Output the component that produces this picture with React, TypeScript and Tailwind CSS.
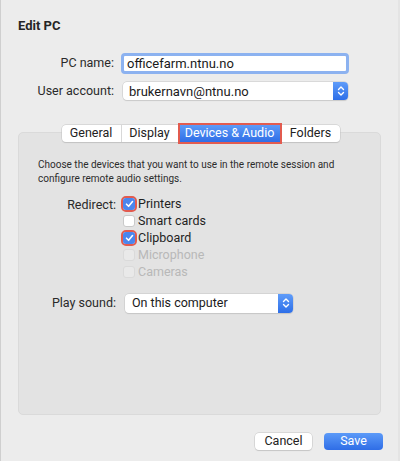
import React from "react";

const font = { fontFamily: "Roboto, 'Liberation Sans', sans-serif" };

function Stepper() {
  return (
    <div className="w-[15px] self-stretch rounded-r-[4px] bg-gradient-to-b from-[#5f9cf9] to-[#2d6ee8] flex items-center justify-center">
      <svg width="8" height="12" viewBox="0 0 8 12" fill="none" stroke="white" strokeWidth="1.4" strokeLinecap="round" strokeLinejoin="round">
        <path d="M1.5 4.5 L4 2 L6.5 4.5" />
        <path d="M1.5 7.5 L4 10 L6.5 7.5" />
      </svg>
    </div>
  );
}

function Check({ state, label }: { state: "on" | "off" | "disabled"; label: string }) {
  return (
    <div className="flex items-center h-[17px]">
      {state === "on" ? (
        <div className="w-[16px] h-[16px] -mx-[2px] rounded-[5px] border-2 border-[#e25b4f] flex items-center justify-center">
          <div className="w-[12px] h-[12px] rounded-[3px] bg-[#4a86ee] flex items-center justify-center">
            <svg width="9" height="8" viewBox="0 0 9 8" fill="none" stroke="white" strokeWidth="1.6" strokeLinecap="round" strokeLinejoin="round">
              <path d="M1.5 4.2 L3.6 6.3 L7.5 1.5" />
            </svg>
          </div>
        </div>
      ) : (
        <div
          className={
            state === "off"
              ? "w-[12px] h-[12px] rounded-[3px] bg-white border border-[#c9c9c9]"
              : "w-[12px] h-[12px] rounded-[3px] bg-[#e9e9e9] border border-[#dadada]"
          }
        />
      )}
      <span className={"ml-[3px] text-[12.5px] " + (state === "disabled" ? "text-[#b8b8b8]" : "text-[#1f1f1f]")}>{label}</span>
    </div>
  );
}

export default function App() {
  return (
    <div style={font} className="w-[400px] h-[461px] bg-[#ececec] border-l border-[#cfcfcf] border-r-2 border-r-[#e4e4e4] flex flex-col text-[#222]">
      <div className="pl-[17px] pt-[18px] h-[16px] box-content text-[13px] leading-[16px] font-bold text-[#262626]">Edit PC</div>

      <div className="mt-[19px] grid grid-cols-[113px_1fr] items-center gap-y-[8px] pr-[49px]">
        <div className="text-right text-[12.5px] text-[#2a2a2a]">PC name:</div>
        <div className="ml-[7px] h-[21px] rounded-[4px] border-[3px] border-[#8cb2f0] bg-white flex items-center pl-[3px] text-[13px] text-[#1a1a1a]">
          officefarm.ntnu.no
        </div>
        <div className="text-right text-[12.5px] text-[#2a2a2a]">User account:</div>
        <div className="ml-[9px] mr-[1px] h-[18px] rounded-[4px] bg-white shadow-[0_0_0_0.5px_#c6c6c6,0_1px_1px_rgba(0,0,0,0.12)] flex items-center">
          <span className="flex-1 pl-[6px] text-[13px] text-[#1a1a1a]">brukernavn@ntnu.no</span>
          <Stepper />
        </div>
      </div>

      <div className="mt-[31px] mx-[17px] h-[283px] rounded-[5px] bg-[#e3e3e3] border border-[#dadada] flex flex-col">
        <div className="-mt-[8px] flex justify-center">
          <div className="flex h-[17px] bg-white rounded-[4px] shadow-[0_0_0_0.5px_#c4c4c4,0_1px_1px_rgba(0,0,0,0.15)] text-[12.5px] text-[#222] ml-[2px]">
            <div className="w-[60px] flex items-center justify-center border-r border-[#d8d8d8]">General</div>
            <div className="w-[56px] flex items-center justify-center">Display</div>
            <div className="w-[104px] -my-[2px] h-[21px] border-2 border-[#e25b4f] bg-gradient-to-b from-[#5c9af8] to-[#2f6de6] text-white flex items-center justify-center">
              Devices &amp; Audio
            </div>
            <div className="w-[58px] flex items-center justify-center">Folders</div>
          </div>
        </div>

        <div className="mt-[16px] pl-[19px] text-[10px] leading-[14px] text-[#2c2c2c] whitespace-nowrap">
          Choose the devices that you want to use in the remote session and
          <br />
          configure remote audio settings.
        </div>

        <div className="mt-[10px] flex">
          <div className="w-[97px] text-right text-[12.5px] text-[#2a2a2a] leading-[17px]">Redirect:</div>
          <div className="ml-[7px] flex flex-col">
            <Check state="on" label="Printers" />
            <Check state="off" label="Smart cards" />
            <Check state="on" label="Clipboard" />
            <Check state="disabled" label="Microphone" />
            <Check state="disabled" label="Cameras" />
          </div>
        </div>

        <div className="mt-[13px] flex items-center">
          <div className="w-[97px] text-right text-[12.5px] text-[#2a2a2a]">Play sound:</div>
          <div className="ml-[9px] w-[168px] h-[19px] rounded-[4px] bg-white shadow-[0_0_0_0.5px_#c6c6c6,0_1px_1px_rgba(0,0,0,0.12)] flex items-center">
            <span className="flex-1 pl-[7px] text-[12.5px] text-[#1a1a1a]">On this computer</span>
            <Stepper />
          </div>
        </div>
      </div>

      <div className="mt-[18px] flex justify-end gap-[12px] pr-[15px]">
        <div className="w-[57px] h-[17px] rounded-[4px] bg-white shadow-[0_0_0_0.5px_#c4c4c4,0_1px_1px_rgba(0,0,0,0.15)] flex items-center justify-center text-[12.5px] text-[#222]">
          Cancel
        </div>
        <div className="w-[59px] h-[17px] rounded-[4px] bg-gradient-to-b from-[#5c9af8] to-[#2f6de6] flex items-center justify-center text-[12.5px] text-white">
          Save
        </div>
      </div>
    </div>
  );
}
